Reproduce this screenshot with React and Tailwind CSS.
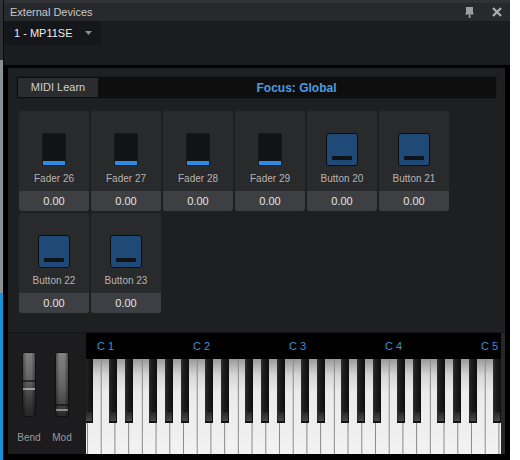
import React from 'react';

const tiles = [
  { name: 'Fader 26', kind: 'fader' },
  { name: 'Fader 27', kind: 'fader' },
  { name: 'Fader 28', kind: 'fader' },
  { name: 'Fader 29', kind: 'fader' },
  { name: 'Button 20', kind: 'button' },
  { name: 'Button 21', kind: 'button' },
  { name: 'Button 22', kind: 'button' },
  { name: 'Button 23', kind: 'button' },
];

const FaderGlyph = () => (
  <div className="w-[24px] h-[33px] rounded-[2px] bg-[#121314] border border-[#18191a] flex items-end px-[0px] pb-[0px]">
    <div className="h-[4px] w-full bg-[#2b8ce8]" />
  </div>
);

const ButtonGlyph = () => (
  <div className="w-[32px] h-[33px] rounded-[3px] border border-[#0b0c0d] bg-[#1f4a77] flex items-end justify-center pb-[5px]">
    <div className="w-[20px] h-[4px] rounded-[1px] bg-[#0f1216]" />
  </div>
);

function Tile({ name, kind }) {
  return (
    <div className="w-[70px] h-[100px] rounded-[3px] overflow-hidden bg-[#292a2c] flex flex-col">
      <div className="flex-1 flex flex-col items-center pt-[22px]">
        {kind === 'fader' ? <FaderGlyph /> : <ButtonGlyph />}
        <span className="mt-[6px] text-[10px] leading-[14px] text-[#b4b4b4] whitespace-nowrap">{name}</span>
      </div>
      <div className="h-[20px] bg-[#3d3f42] flex items-center justify-center text-[11px] text-[#e6e6e6]">0.00</div>
    </div>
  );
}

function Wheel({ marks }) {
  const ridges = [];
  for (let y = 2; y < 64; y += 2) ridges.push(y);
  return (
    <svg width="14" height="65" viewBox="0 0 14 65">
      <defs>
        <linearGradient id={`wg-${marks}`} x1="0" y1="0" x2="0" y2="1">
          {marks === 'bend' ? (
            <>
              <stop offset="0" stopColor="#858585" />
              <stop offset="0.4" stopColor="#6a6a6a" />
              <stop offset="0.7" stopColor="#444" />
              <stop offset="1" stopColor="#262626" />
            </>
          ) : (
            <>
              <stop offset="0" stopColor="#8a8a8a" />
              <stop offset="0.5" stopColor="#6c6c6c" />
              <stop offset="0.8" stopColor="#4a4a4a" />
              <stop offset="1" stopColor="#2a2a2a" />
            </>
          )}
        </linearGradient>
        <linearGradient id={`ws-${marks}`} x1="0" y1="0" x2="1" y2="0">
          <stop offset="0" stopColor="#000" stopOpacity="0.35" />
          <stop offset="0.3" stopColor="#000" stopOpacity="0" />
          <stop offset="0.7" stopColor="#000" stopOpacity="0" />
          <stop offset="1" stopColor="#000" stopOpacity="0.4" />
        </linearGradient>
      </defs>
      <rect x="0.5" y="0.5" width="13" height="64" rx="2" fill={`url(#wg-${marks})`} stroke="#111" />
      {ridges.map((y) => (
        <line key={y} x1="1" x2="13" y1={y} y2={y} stroke="#000" strokeOpacity="0.12" strokeWidth="0.8" />
      ))}
      <rect x="1" y="1" width="12" height="63" fill={`url(#ws-${marks})`} />
      {marks === 'bend' ? (
        <>
          <line x1="1" x2="13" y1="29" y2="29" stroke="#161616" strokeWidth="1.5" />
          <line x1="1" x2="13" y1="37" y2="37" stroke="#b8b8b8" strokeWidth="1.5" />
        </>
      ) : (
        <>
          <line x1="1" x2="13" y1="53" y2="53" stroke="#141414" strokeWidth="1.5" />
          <line x1="1" x2="13" y1="58" y2="58" stroke="#a8a8a8" strokeWidth="1.5" />
        </>
      )}
    </svg>
  );
}

function Keys() {
  const w = 13.714;
  const c0 = 14.7;
  const whites = [];
  for (let i = -2; i < 30; i++) whites.push(c0 + i * w);
  const blacks = [];
  for (let k = -1; k < 5; k++) {
    [8.3, 24.3, 48.3, 64.3, 80.3].forEach((o) => blacks.push(c0 + 96 * k + o));
  }
  return (
    <svg width="415" height="95" viewBox="0 0 415 95" className="block">
      <defs>
        <linearGradient id="wk" x1="0" y1="0" x2="0" y2="1">
          <stop offset="0" stopColor="#9a9a9a" />
          <stop offset="0.17" stopColor="#d6d6d6" />
          <stop offset="0.35" stopColor="#ebebeb" />
          <stop offset="1" stopColor="#f2f2f2" />
        </linearGradient>
        <linearGradient id="bk" x1="0" y1="0" x2="1" y2="0">
          <stop offset="0" stopColor="#2e2e2e" />
          <stop offset="0.35" stopColor="#1c1c1c" />
          <stop offset="1" stopColor="#0e0e0e" />
        </linearGradient>
        <linearGradient id="bkf" x1="0" y1="0" x2="0" y2="1">
          <stop offset="0" stopColor="#262626" />
          <stop offset="1" stopColor="#484848" />
        </linearGradient>
      </defs>
      <rect x="0" y="0" width="415" height="95" fill="url(#wk)" />
      {whites.map((x, i) => (
        <line key={i} x1={x + 0.5} x2={x + 0.5} y1="0" y2="95" stroke="#8a8a8a" strokeWidth="1" />
      ))}
      {blacks.map((x, i) => (
        <g key={i}>
          <rect x={x} y="0" width="8" height="64" fill="url(#bk)" />
          <rect x={x + 1} y="53" width="6" height="9" fill="url(#bkf)" />
          <rect x={x} y="62" width="8" height="2" fill="#151515" />
        </g>
      ))}
    </svg>
  );
}

export default function App() {
  return (
    <div
      className="w-[520px] h-[460px] flex bg-white overflow-hidden"
      style={{ fontFamily: '"Liberation Sans", Arial, sans-serif' }}
    >
      {/* strip of the window behind */}
      <div className="w-[3px] flex flex-col">
        <div className="h-[60px] bg-[#2e3033]" />
        <div className="h-[233px] bg-[#8b9096]" />
        <div className="flex-1 bg-[#1b8ed8]" />
      </div>

      <div className="w-[507px] flex flex-col border-l border-[#0b0b0c] bg-[#1b1c1f]">
        <div className="h-[3px] bg-[#313235]" />
        <div className="h-[18px] bg-[#27292c] flex items-center pl-[6px] pr-[8px]">
          <span className="text-[11px] text-[#c8c8c8]">External Devices</span>
          <div className="ml-auto flex items-center gap-[18px]">
            <svg width="9" height="11" viewBox="0 0 9 11">
              <rect x="1" y="0" width="7" height="6" fill="#9e9e9e" />
              <rect x="0.5" y="6" width="8" height="1.5" fill="#9e9e9e" />
              <rect x="3.7" y="7.5" width="1.8" height="3.5" fill="#9e9e9e" />
            </svg>
            <svg width="10" height="10" viewBox="0 0 10 10">
              <path d="M1 1 L9 9 M9 1 L1 9" stroke="#ababab" strokeWidth="2.4" />
            </svg>
          </div>
        </div>
        <div className="h-[44px]">
          <div className="w-[97px] h-[24px] bg-[#151619] flex items-center pl-[10px]">
            <span className="text-[11px] text-[#ececec]">1 - MP11SE</span>
            <svg className="ml-auto mr-[9px]" width="7" height="4" viewBox="0 0 7 4">
              <path d="M0 0 L7 0 L3.5 4 Z" fill="#8d8d8d" />
            </svg>
          </div>
        </div>

        <div className="flex-1 bg-black pt-[3px] pb-[6px] pl-[4px] pr-[5px] flex">
          <div className="flex-1 bg-[#1e1f21] flex flex-col pt-[8px]">
            <div className="mx-[8px] h-[23px] bg-[#0e0e0f] border border-[#1a1b1d] p-[1px] flex">
              <div className="w-[80px] bg-[#2b2c2f] flex items-center justify-center text-[11px] text-[#cfcfcf]">
                MIDI Learn
              </div>
              <div className="flex-1 flex items-center justify-center text-[12px] font-bold text-[#4a9de0]">
                Focus: Global
              </div>
            </div>

            <div className="mt-[12px] pl-[11px] grid grid-cols-[repeat(6,70px)] gap-[2px]">
              {tiles.map((t) => (
                <Tile key={t.name} {...t} />
              ))}
            </div>

            <div className="flex-1" />

            <div className="h-[122px] border-t border-[#141415] flex bg-[#1b1b1c]">
              <div className="w-[78px] bg-[#1c1c1e] flex pl-[6px] gap-[3px] pt-[19px]">
                <div className="w-[30px] flex flex-col items-center">
                  <Wheel marks="bend" />
                  <span className="mt-[14px] text-[10px] leading-[14px] text-[#9a9a9a]">Bend</span>
                </div>
                <div className="w-[30px] flex flex-col items-center">
                  <Wheel marks="mod" />
                  <span className="mt-[14px] text-[10px] leading-[14px] text-[#9a9a9a]">Mod</span>
                </div>
              </div>
              <div className="w-[415px] flex flex-col">
                <div className="h-[26px] bg-black flex items-center pl-[11px] overflow-hidden">
                  {['C 1', 'C 2', 'C 3', 'C 4', 'C 5'].map((c) => (
                    <span key={c} className="w-[96px] shrink-0 text-[11px] text-[#3d8fd6]">
                      {c}
                    </span>
                  ))}
                </div>
                <Keys />
              </div>
              <div className="w-[4px] bg-[#272728]" />
            </div>
          </div>
        </div>
      </div>
    </div>
  );
}
